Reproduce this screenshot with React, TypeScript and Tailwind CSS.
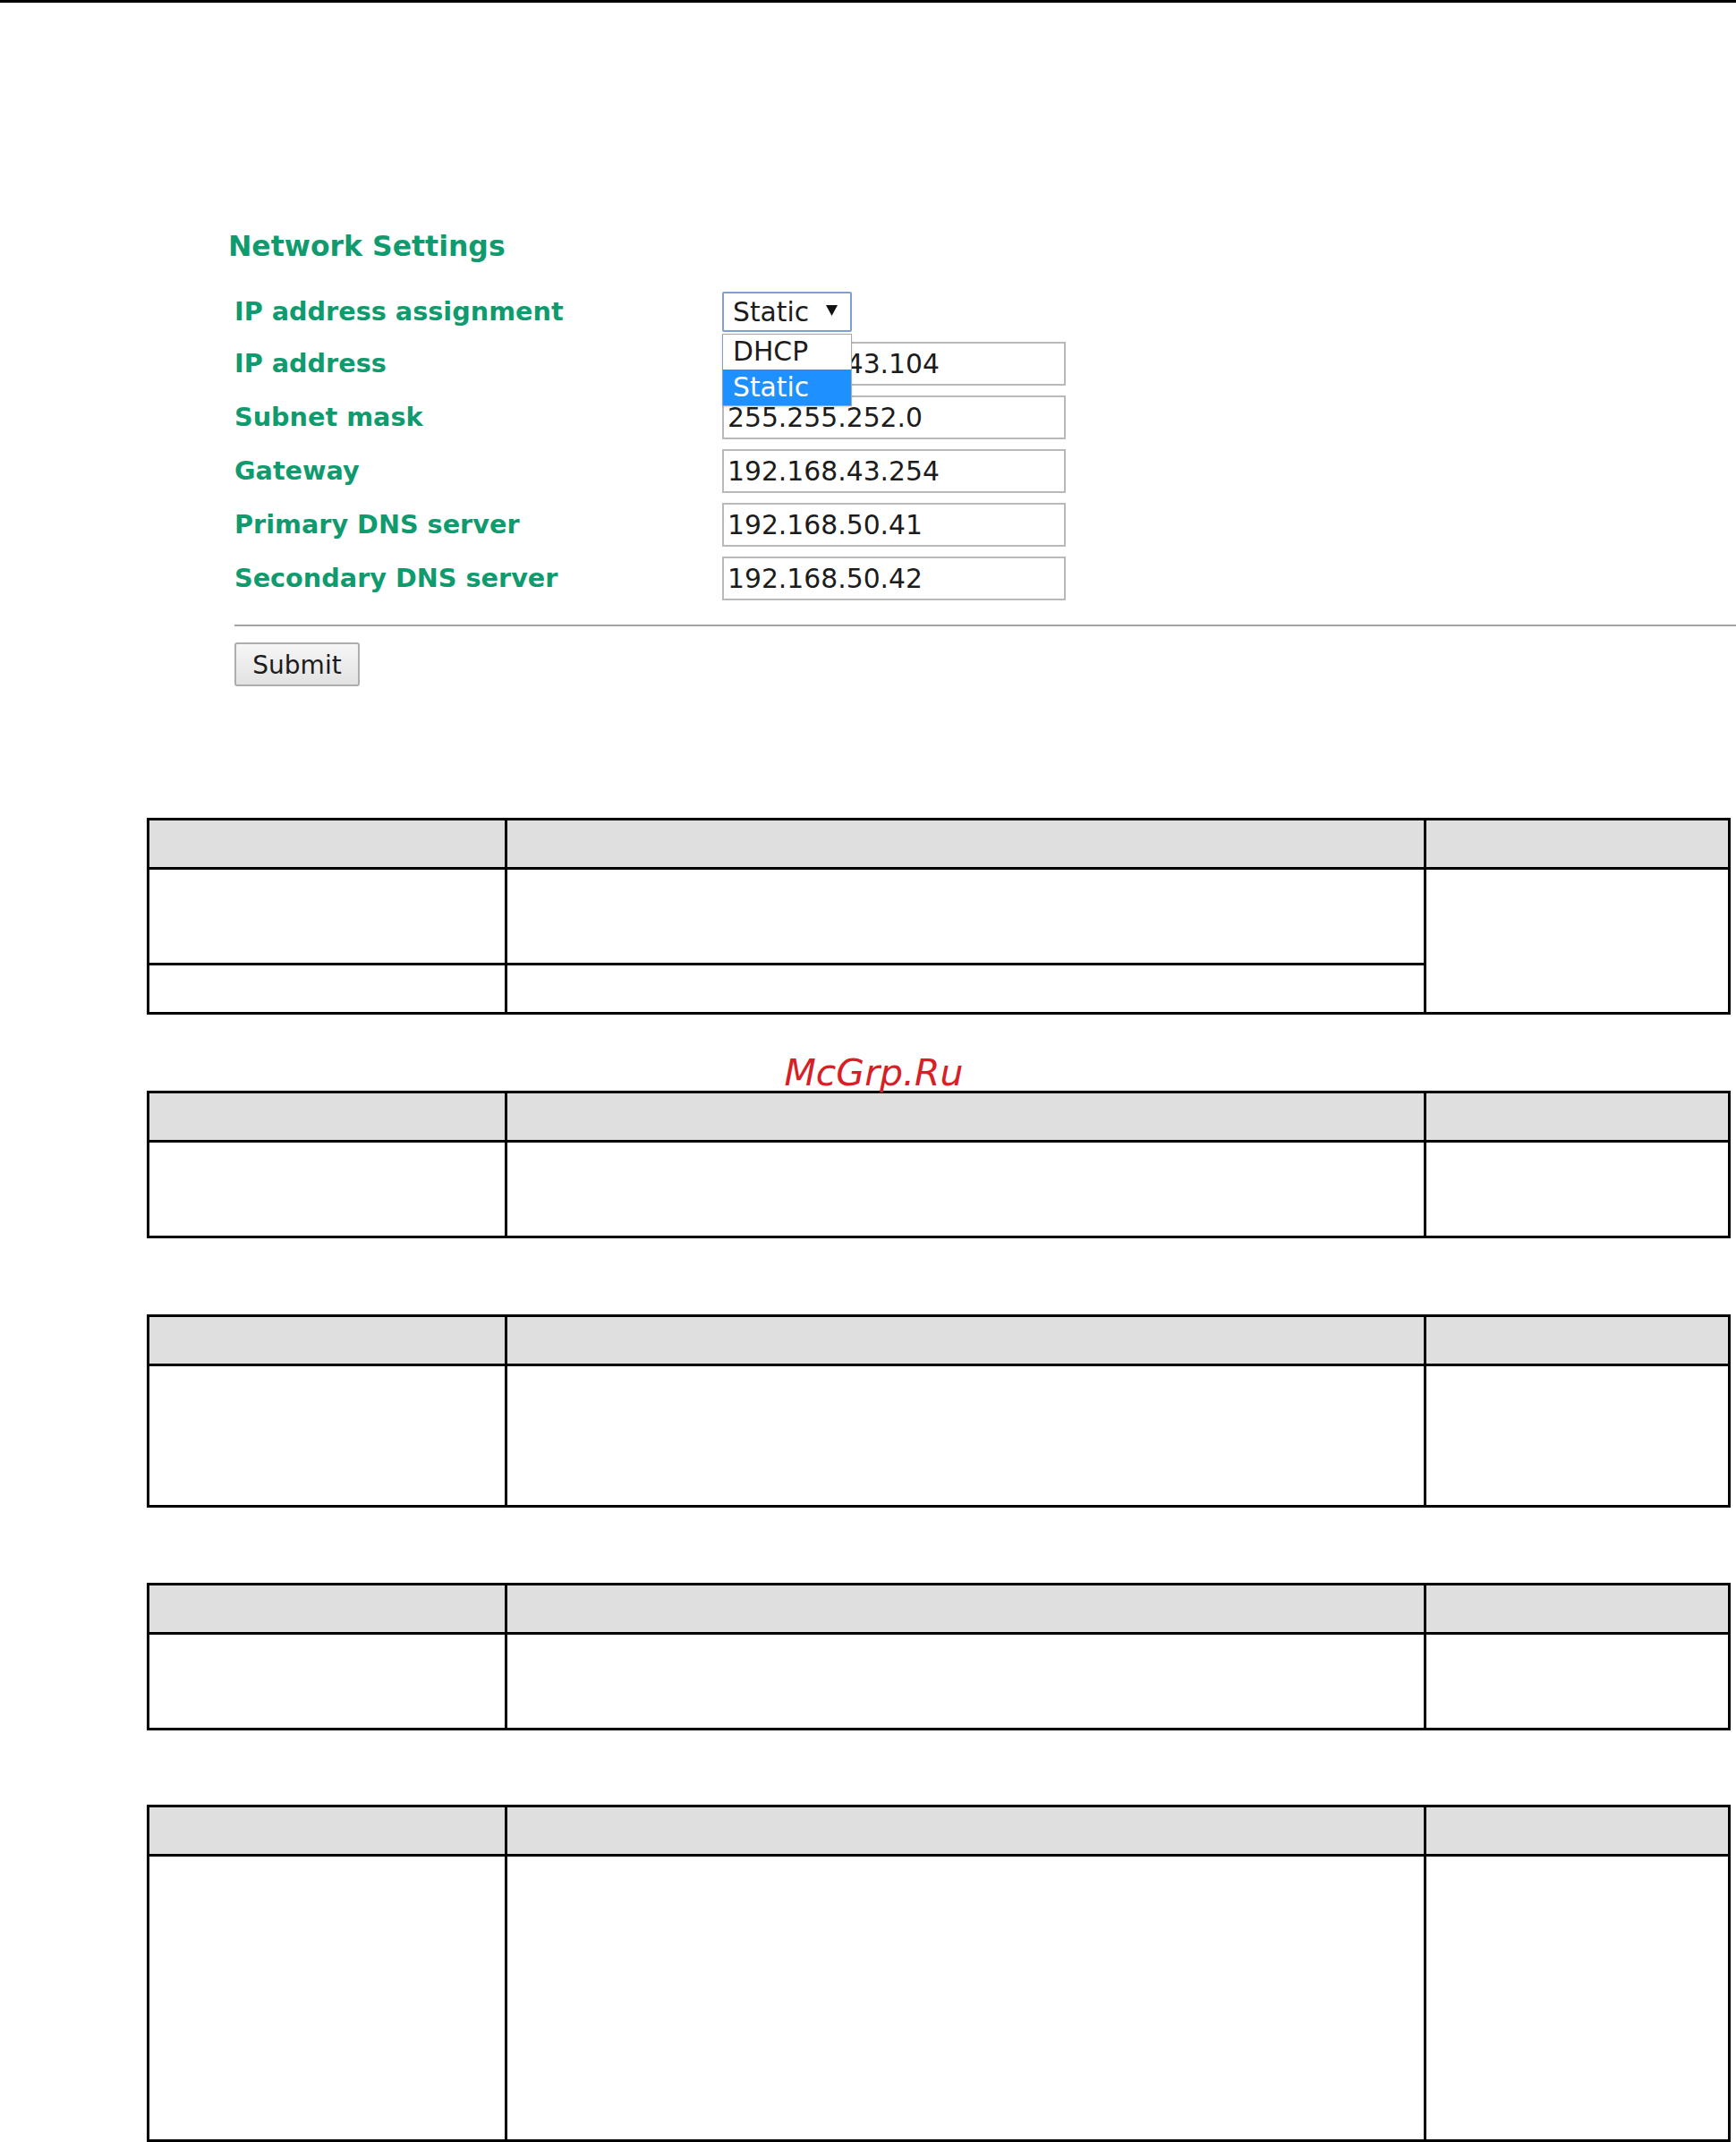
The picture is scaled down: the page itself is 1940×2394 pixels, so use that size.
import React from "react";

const LABEL = "text-[28.7px] font-bold text-[#0f9b6e] leading-[35px]";
const FIELD_TEXT = "text-[29.8px] text-[#1c1c1c] leading-none";
const CELL = "border-[3px] border-black";

const rows = [
  { label: "IP address", value: "192.168.43.104" },
  { label: "Subnet mask", value: "255.255.252.0" },
  { label: "Gateway", value: "192.168.43.254" },
  { label: "Primary DNS server", value: "192.168.50.41" },
  { label: "Secondary DNS server", value: "192.168.50.42" },
];

function TextBox({ value }: { value: string }) {
  return (
    <div className="w-[384px] h-[49px] border-2 border-[#b9b9b9] bg-white flex items-center pl-[4px] overflow-hidden">
      <span className={`${FIELD_TEXT} mt-[2px]`}>{value}</span>
    </div>
  );
}

function SelectBox() {
  return (
    <div className="relative w-[145px] h-[45px]">
      <div className="w-full h-full border-2 border-[#7c9fd6] rounded-[2px] bg-white flex items-center pl-[10px] pr-[14px] justify-between">
        <span className={`${FIELD_TEXT} mt-[2px]`}>Static</span>
        <svg width="13" height="12" viewBox="0 0 13 12" className="mt-[-2px]">
          <path d="M0 0 H13 L6.5 12 Z" fill="#111" />
        </svg>
      </div>
      {/* open option list */}
      <div className="absolute left-0 top-full mt-[2px] w-[145px] z-10 bg-white border border-[#a9a9a9] border-l-[#7c9fd6] shadow-sm">
        <div className="h-[39px] flex items-center pl-[11px]">
          <span className={FIELD_TEXT}>DHCP</span>
        </div>
        <div className="h-[40px] flex items-center pl-[11px] bg-[#1e90ff]">
          <span className="text-[29.8px] text-white leading-none">Static</span>
        </div>
      </div>
    </div>
  );
}

function SpecTable({ body, split }: { body: number; split?: boolean }) {
  return (
    <table className="border-collapse table-fixed w-[1770px]">
      <colgroup>
        <col className="w-[400px]" />
        <col className="w-[1027px]" />
        <col />
      </colgroup>
      <thead>
        <tr className="h-[55px] bg-[#dfdfdf]">
          <th className={CELL} />
          <th className={CELL} />
          <th className={CELL} />
        </tr>
      </thead>
      <tbody>
        {split ? (
          <>
            <tr className="h-[107px]">
              <td className={CELL} />
              <td className={CELL} />
              <td className={CELL} rowSpan={2} />
            </tr>
            <tr className="h-[55px]">
              <td className={CELL} />
              <td className={CELL} />
            </tr>
          </>
        ) : (
          <tr style={{ height: body }}>
            <td className={CELL} />
            <td className={CELL} />
            <td className={CELL} />
          </tr>
        )}
      </tbody>
    </table>
  );
}

export default function App() {
  return (
    <div
      className="w-[1940px] h-[2394px] overflow-hidden bg-white border-t-[3px] border-black"
      style={{ fontFamily: '"DejaVu Sans", Verdana, sans-serif' }}
    >
      {/* Network Settings form */}
      <div className="pt-[255px] pl-[262px]">
        <h2 className="text-[31.5px] font-bold text-[#0f9b6e] leading-[35px] -ml-[7px]">Network Settings</h2>

        <div className="mt-[27px]">
          <div className="h-[56px] flex items-center">
            <div className={`w-[545px] ${LABEL}`}>IP address assignment</div>
            <SelectBox />
          </div>
          {rows.map((r) => (
            <div key={r.label} className="h-[60px] flex items-center">
              <div className={`w-[545px] ${LABEL}`}>{r.label}</div>
              <TextBox value={r.value} />
            </div>
          ))}
        </div>

        <div className="mt-[22px] h-[2px] bg-[#a4a4a4]" />

        <button className="mt-[18px] w-[140px] h-[49px] border-2 border-[#adadad] rounded-[3px] bg-gradient-to-b from-[#f6f6f6] to-[#e2e2e2] flex items-center justify-center">
          <span className="text-[28px] text-[#1c1c1c] leading-none mt-[2px]">Submit</span>
        </button>
      </div>

      {/* spec tables */}
      <div className="mt-[147px] pl-[164px] flex flex-col">
        <SpecTable body={0} split />
        <div className="h-[85px] -ml-[164px] w-[1940px] flex items-end justify-center pl-[13px]">
          <span className="text-[41px] italic text-[#d61f26] leading-none mb-[-1px] relative z-10">
            McGrp.Ru
          </span>
        </div>
        <SpecTable body={107} />
        <div className="h-[85px]" />
        <SpecTable body={158} />
        <div className="h-[84px]" />
        <SpecTable body={107} />
        <div className="h-[83px]" />
        <SpecTable body={319} />
      </div>
    </div>
  );
}
